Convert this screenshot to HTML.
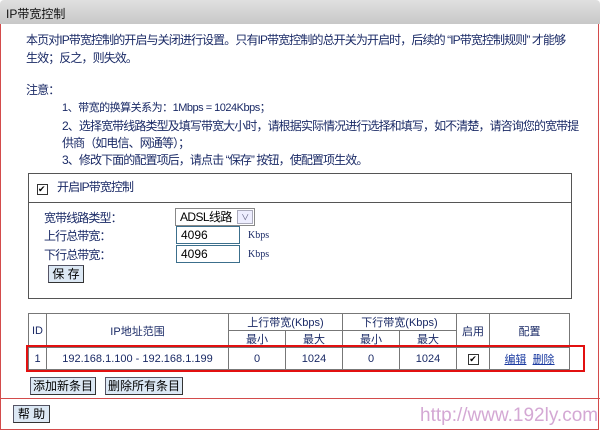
<!DOCTYPE html>
<html><head><meta charset="utf-8"><style>
*{margin:0;padding:0;box-sizing:border-box}
body{width:600px;height:432px;background:#fff;font-family:"Liberation Sans","Noto Sans CJK SC",sans-serif;font-size:12px;color:#1a2a66;position:relative;overflow:hidden}
.a{position:absolute;white-space:nowrap;line-height:14px}
.t{letter-spacing:-0.9px}
#title{position:absolute;left:0;top:0;width:600px;height:24px;background:linear-gradient(#e0e0e0,#c8c8c8);border-radius:4px 4px 0 0;color:#111;padding:5px 0 0 6px;font-size:12px}
#frame{position:absolute;left:0;top:24px;width:599px;height:406px;border:1px solid #d34b4b;border-top:none}
.box{position:absolute;border:1px solid #555;background:#fff}
.inp{position:absolute;border:1px solid #3c6f8c;background:#fff;height:18px;padding:2px 4px;font-size:12px;color:#000;line-height:13px}
.btn{position:absolute;background:#dce8f4;border:1px solid #556;border-right-color:#333;border-bottom-color:#333;color:#000;height:18px;text-align:center;line-height:16px;font-size:12px}
table{position:absolute;left:28px;top:313px;width:542px;border-collapse:collapse;background:#fff}
td{border:1px solid #777;text-align:center;font-size:11px;height:16px;color:#1a2a66;padding:0}
.cb{display:inline-block;width:11px;height:11px;border:1px solid #333;font-size:9px;line-height:9px;color:#000;background:#fff}
</style></head><body>
<div id="title">IP带宽控制</div>
<div id="frame"></div>
<div class="a t" style="left:26px;top:33px">本页对IP带宽控制的开启与关闭进行设置。只有IP带宽控制的总开关为开启时，后续的 “IP带宽控制规则” 才能够</div>
<div class="a t" style="left:26px;top:51px">生效；反之，则失效。</div>
<div class="a t" style="left:26px;top:83px">注意：</div>
<div class="a t" style="left:62px;top:101px;font-size:11px;letter-spacing:-0.5px">1、带宽的换算关系为：1Mbps = 1024Kbps；</div>
<div class="a t" style="left:62px;top:119px">2、选择宽带线路类型及填写带宽大小时，请根据实际情况进行选择和填写，如不清楚，请咨询您的宽带提</div>
<div class="a t" style="left:62px;top:136px">供商（如电信、网通等）；</div>
<div class="a t" style="left:62px;top:153px">3、修改下面的配置项后，请点击 “保存” 按钮，使配置项生效。</div>

<div class="box" style="left:28px;top:173px;width:544px;height:126px"></div>
<div style="position:absolute;left:29px;top:202px;width:542px;border-top:1px solid #555"></div>
<div class="a" style="left:37px;top:181px"><span class="cb">✔</span></div>
<div class="a t" style="left:57px;top:180px">开启IP带宽控制</div>
<div class="a t" style="left:44px;top:211px">宽带线路类型：</div>
<div class="a t" style="left:44px;top:229px">上行总带宽：</div>
<div class="a t" style="left:44px;top:248px">下行总带宽：</div>
<div class="inp" style="left:175px;top:208px;width:80px;border-color:#888;padding-top:2px;letter-spacing:-0.6px">ADSL线路<span style="position:absolute;right:1px;top:1px;width:16px;height:14px;border:1px solid #aab;background:#eef;font-size:8px;text-align:center;color:#557">∨</span></div>
<div class="inp" style="left:176px;top:226px;width:64px">4096</div>
<div class="inp" style="left:176px;top:245px;width:64px">4096</div>
<div class="a" style="left:248px;top:229px;font-size:10px;font-family:'Liberation Serif',serif">Kbps</div>
<div class="a" style="left:248px;top:248px;font-size:10px;font-family:'Liberation Serif',serif">Kbps</div>
<div class="btn" style="left:48px;top:265px;width:36px">保 存</div>

<table>
<tr><td rowspan="2" style="width:18px">ID</td><td rowspan="2" style="width:182px">IP地址范围</td><td colspan="2" style="font-size:11px">上行带宽(Kbps)</td><td colspan="2" style="font-size:11px">下行带宽(Kbps)</td><td rowspan="2" style="width:33px">启用</td><td rowspan="2">配置</td></tr>
<tr><td style="width:57px">最小</td><td style="width:57px">最大</td><td style="width:57px">最小</td><td style="width:57px">最大</td></tr>
<tr><td style="height:22px">1</td><td>192.168.1.100 - 192.168.1.199</td><td>0</td><td>1024</td><td>0</td><td>1024</td><td><span class="cb">✔</span></td><td><u style="color:#1a3aa0">编辑</u>&nbsp;&nbsp;<u style="color:#1a3aa0">删除</u></td></tr>
</table>
<div style="position:absolute;left:26px;top:345px;width:559px;height:27px;border:2px solid #e21010"></div>
<div class="btn" style="left:30px;top:377px;width:66px">添加新条目</div>
<div class="btn" style="left:105px;top:377px;width:78px">删除所有条目</div>
<div style="position:absolute;left:0;top:398px;width:600px;border-top:1px solid #d34b4b"></div>
<div class="btn" style="left:13px;top:405px;width:37px">帮 助</div>
<div class="a" style="left:420px;top:405px;font-size:19px;line-height:22px;color:#d4a8d4">http://www.192ly.com</div>
</body></html>
